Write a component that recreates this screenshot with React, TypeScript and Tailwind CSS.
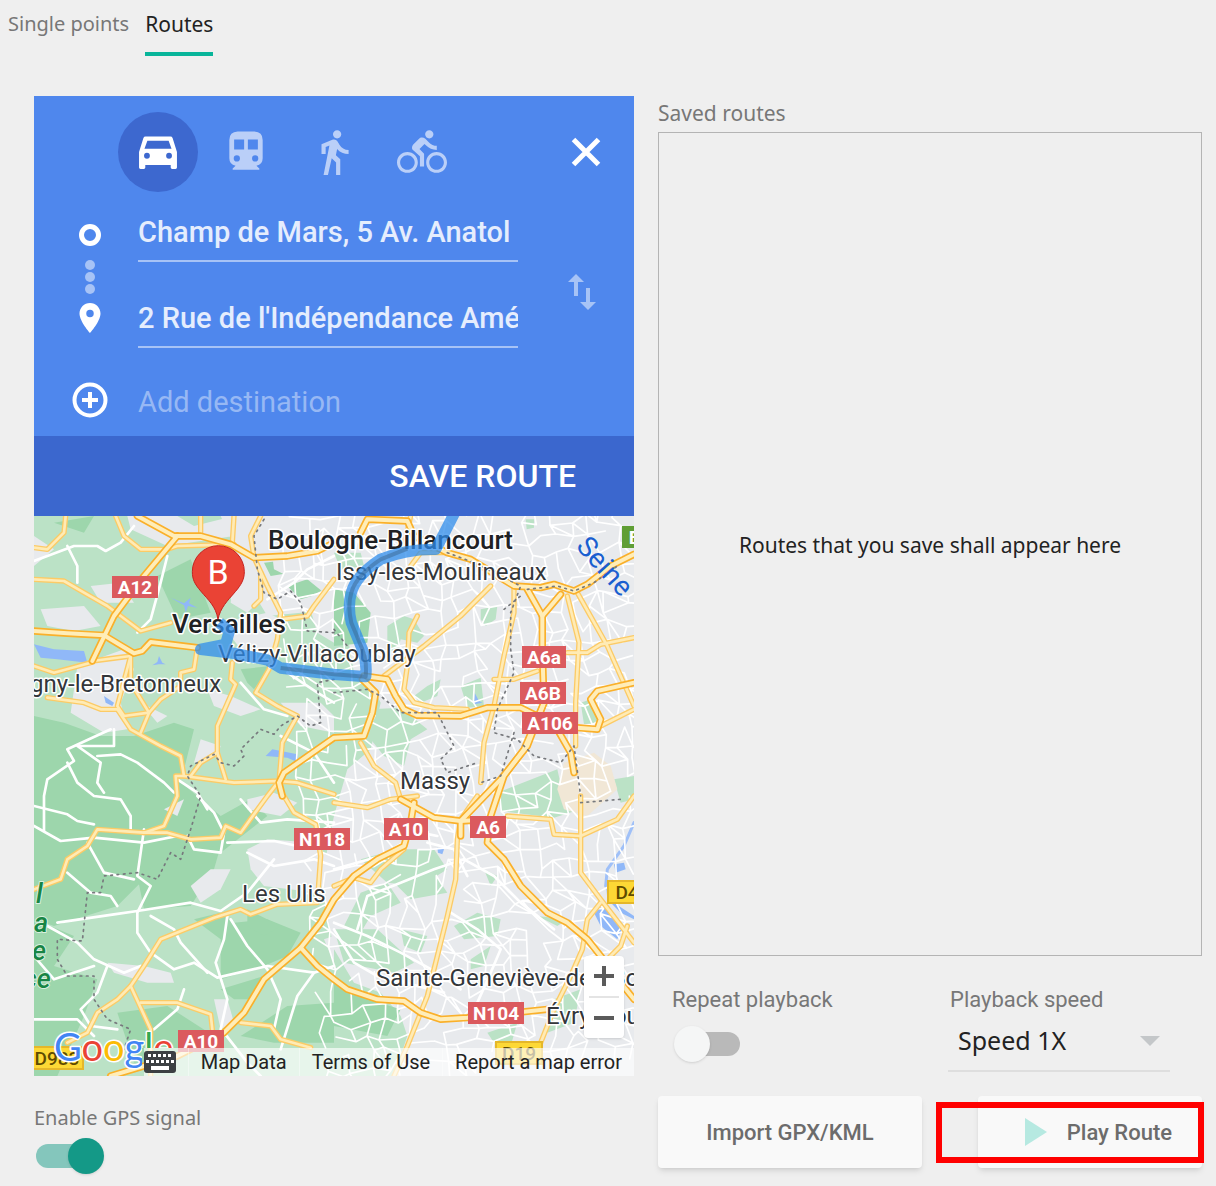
import type { ReactNode } from "react";
import { MdDirectionsBike, MdDirectionsWalk, MdPlace, MdSwapVert } from "react-icons/md";

/* Map geometry is stored at three units per map pixel. */

const lightGreen = [
  "M0 0H560L600 90 640 200 700 300 800 290 900 270 930 300 960 470 1020 520 1040 560 1010 700 940 760 900 900 860 1100 900 1300 960 1400 1040 1430 1100 1500 1120 1560 1080 1680 0 1680Z",
  "M1010 580L1100 575 1180 640 1130 670 1110 750 1050 720 1010 670Z",
  "M1280 510L1340 485 1350 570 1300 575Z",
  "M1340 280L1390 270 1385 310 1355 330 1340 310Z",
  "M1390 830L1570 760 1590 850 1640 880 1560 905 1400 885Z",
  "M1640 560L1670 550 1695 620 1650 625Z",
  "M1060 330L1110 300 1140 310 1170 360 1150 380 1100 370 1090 410 1060 400Z",
  "M980 1030L1090 1000 1200 1000 1240 1060 1160 1110 1060 1100Z",
  "M930 1230L980 1130 1060 1100 1100 1160 1010 1200 980 1250Z",
  "M1060 1080L1200 1070 1240 1130 1130 1150Z",
  "M900 1240L1030 1240 1140 1340 1080 1370 930 1340Z",
  "M1100 1240L1180 1260 1160 1310 1110 1290Z",
  "M1260 1230L1330 1190 1400 1210 1390 1260 1290 1270Z",
  "M1310 1330L1370 1290 1350 1350 1310 1360Z",
  "M1350 1060L1390 1080 1370 1110Z",
  "M1360 1550L1450 1520 1430 1590 1380 1580Z",
  "M1560 1450L1640 1420 1620 1520 1540 1550Z",
  "M1140 540L1180 510 1220 490 1210 540 1160 560Z",
  "M900 110L980 110 990 150 920 160Z",
  "M1475 10H1500V35L1478 40Z",
  "M1510 1200L1600 1210 1570 1230Z",
  "M1740 790L1800 780V850L1760 860Z",
];

const forest = [
  "M0 600L90 620 200 660 300 660 420 620 480 640 450 760 430 790 560 900 650 850 700 900 560 1010 440 1000 330 1090 250 1170 60 1230 0 1210Z",
  "M0 1210L120 1260 60 1350 190 1390 150 1500 70 1680 0 1680Z",
  "M440 1000L560 990 540 1060 470 1170 330 1180 310 1080Z",
  "M480 1210L560 1190 600 1220 700 1210 800 1250 760 1320 690 1350 560 1390 560 1270Z",
  "M560 1420L690 1380 650 1450 600 1450Z",
  "M250 1490L400 1470 540 1560 420 1640 300 1640Z",
  "M620 1560L760 1470 900 1460V1580L720 1580Z",
  "M370 180L470 130 530 290 430 310Z",
  "M690 140L780 130 770 170 710 180Z",
  "M760 210L820 190 870 230 800 250Z",
  "M900 220L960 230 1010 290 1000 380 900 390Z",
  "M620 460L710 450 660 520 640 500Z",
  "M900 1390L1000 1450 1100 1480 1060 1560 900 1530Z",
  "M60 20L180 0 150 50Z",
  "M640 1180L740 1230 690 1260 640 1230Z",
];

const urban = [
  "M20 280L150 270 200 330 120 345 40 330Z",
  "M170 210L260 200 300 260 200 260Z",
  "M130 450L270 400 300 460 260 560 280 640 210 650 110 590Z",
  "M280 0H430L480 30 600 0H700L720 110 600 60 400 90 290 40Z",
  "M600 130L670 150 690 240 640 290 590 260Z",
  "M560 320L700 290 740 310 720 420 620 400Z",
  "M520 520L590 540 680 580 620 600 540 570Z",
  "M700 0H900V120L780 190 720 160Z",
  "M740 560L860 560 900 600V650L800 630Z",
  "M820 250L900 200V380L850 350Z",
  "M320 560L400 600 370 620Z",
  "M500 670L560 690 550 720 480 740Z",
  "M640 1000L700 970 840 980 900 1040 850 1130 690 1110 650 1060Z",
  "M470 1110L530 1060 590 1060 560 1120 500 1160Z",
  "M220 1340L330 1350 410 1370 420 1400 340 1400 240 1370Z",
  "M540 1450L580 1450 600 1520 560 1540Z",
  "M640 850L720 830 790 860 740 900 640 880Z",
  "M870 1270L900 1260V1340Z",
  "M0 60L60 100 0 150Z",
  "M390 880L450 850 430 900Z",
];

const water = [
  "M0 385L60 400 150 405 160 440 70 430 20 425Z",
  "M375 420L385 440 395 445 375 445 355 448 370 438Z",
  "M695 720L715 700 790 715 795 740 760 725Z",
  "M210 540L240 560 235 570 215 560Z",
  "M410 245L450 262 470 245 465 262 490 275 462 270 455 290 450 268Z",
  "M1740 1045L1770 1040 1775 1060 1745 1070Z",
  "M1680 1190L1710 1165 1745 1210 1765 1240 1750 1270 1700 1230Z",
  "M1210 995L1230 1000 1225 1015 1212 1010Z",
  "M1322 530L1335 555 1345 560 1320 565Z",
  "M1800 1210L1760 1190 1720 1150 1715 1090 1740 1160 1800 1200Z",
];

const sideRoads = [
  "M0 135L40 120 120 90 190 90 215 105 260 80 300 30",
  "M100 90L130 150 130 200",
  "M400 120L380 200 350 310 310 350",
  "M230 640L100 700 120 735 40 790 30 840V945",
  "M100 740L130 800 180 840 260 850 290 900 290 945",
  "M240 640V690L130 690 200 740 190 800 210 830",
  "M190 720L260 715 310 740 390 800 420 830",
  "M0 870L100 895 130 915 180 925",
  "M0 930L80 975 180 965 330 980 430 960",
  "M330 940L310 1080 350 1110 310 1190 310 1250 350 1310 420 1360 480 1340 550 1385 700 1350 840 1370 900 1350",
  "M70 1220L240 1195 310 1185 470 1160 560 1185 640 1130 720 1030",
  "M40 1230L130 1280 180 1330 270 1370 320 1350",
  "M580 1200L570 1270 545 1340 580 1450 560 1540",
  "M590 1210L640 1290 700 1360 740 1450 720 1540",
  "M740 1600L790 1440 840 1370",
  "M350 1200L420 1240 440 1280 520 1370",
  "M220 1350L190 1430 140 1480 170 1530 250 1540",
  "M0 1510L130 1510 180 1560",
  "M490 840L540 890 570 950 560 1010 480 1000 460 960",
  "M620 850L680 920 760 910 900 920",
  "M0 1320L60 1390 180 1350",
  "M100 1070L170 1130 230 1140 250 1170",
  "M160 980L210 1070 300 1090",
  "M580 980L720 975 790 990",
  "M640 1010L720 1050 840 1030 900 1050",
  "M620 500L690 580 760 600",
  "M700 250L780 200 820 160 900 120",
  "M740 660L840 710 880 770 900 800",
  "M760 470L850 530 900 560",
  "M430 790L490 830 520 880",
  "M360 1540L430 1480 450 1420",
  "M570 1550L640 1640 680 1680",
  "M900 1220L1000 1260 1100 1310 1210 1370 1280 1420",
  "M900 1240L960 1340 1030 1380 1110 1400 1230 1430",
  "M900 1060L1040 1020 1160 950 1210 960",
  "M970 1240L1000 1140 1100 1100 1200 1060 1290 1030",
  "M1250 1190L1330 1240 1400 1300 1370 1370 1330 1460",
  "M1290 1030L1380 1080 1460 1160 1560 1240",
  "M1180 980L1260 1000 1300 1080",
];

const localYellow = [
  "M0 95L40 100 90 50 95 0",
  "M245 0L270 60 320 100 400 100 430 90 600 85",
  "M0 190L90 195 150 230 220 270 320 345 410 320",
  "M0 450L60 470 170 440",
  "M40 545L150 560 200 580 250 580 290 640 380 690 440 720 450 780 600 800 735 795 790 800 900 835",
  "M175 435L290 420 290 500 345 590 320 650",
  "M490 395L480 460 440 470 440 510 380 550 345 590 270 600 250 570 290 420",
  "M595 440L590 490 605 505 550 630 550 710 500 740 470 780",
  "M550 710L575 790",
  "M900 190L840 270 820 300 740 310",
  "M600 0L595 80",
  "M500 0V60",
  "M680 0L650 60 660 125 700 210 740 290 730 370 705 460 665 530 730 570 790 600 745 680 735 795",
  "M660 270L680 250 680 170",
  "M450 780L425 780 430 840 390 930 330 950 190 940 160 990 100 1030 80 1090 0 1120",
  "M330 950L400 950 470 970 560 965 575 930 620 950 700 840 735 795",
  "M750 840L780 890 845 925 860 1020 850 1160 730 1165 650 1195 620 1180 540 1205 380 1270 330 1350 290 1410 250 1450 190 1490 160 1550 100 1580",
  "M290 1410L350 1540 350 1680",
  "M320 1460H430L530 1495 535 1540",
  "M620 1520L710 1530 740 1570 830 1595",
  "M1440 220V290L1410 420 1380 570 1350 680 1340 800",
  "M1370 210L1280 300 1170 390 1050 480",
  "M1150 300L1125 350 1120 450 1110 520 1140 560 1200 575 1300 580",
  "M1600 240L1635 380 1625 560 1625 690",
  "M1630 230L1720 390 1800 570",
  "M1600 410H1660L1700 385 1800 365",
  "M1380 490H1440L1510 465",
  "M980 680L1020 750 1085 800 1100 850",
  "M1640 840V960L1640 1070 1700 1150 1800 1280",
  "M1420 900L1550 910 1560 955 1640 960 1750 910 1800 840",
  "M1700 1160L1660 1210 1645 1300 1610 1380 1560 1480 1520 1580",
  "M1330 840L1280 910 1270 970 1265 1090 1240 1200 1210 1320 1180 1440 1120 1590 1080 1680",
  "M900 1110L960 1085 1010 1100 1040 1060 1110 1000",
  "M900 860L1000 875 1070 850 1150 840",
  "M1110 90L1130 0",
  "M1130 150L1160 110 1240 110",
  "M1700 630L1800 580",
  "M1720 1330L1760 1290 1780 1230",
];

const motorways = [
  "M310 0L420 60 500 60 590 85 660 125 760 120 850 105 900 80",
  "M430 60L330 180 240 300 175 435",
  "M0 345L100 352 210 358 300 412 325 405 350 378 490 395",
  "M985 490L1025 530 1015 590 990 660 900 665 750 770 735 800 745 840",
  "M990 480L1060 490 1085 540 1110 580 1150 598 1280 600 1360 575 1460 575 1560 625",
  "M980 50L1000 10 1120 15 1140 60 1240 110 1310 130 1440 210 1520 215 1560 205 1620 225 1660 205 1730 150 1800 115",
  "M1480 220L1525 300 1525 400 1530 560 1480 690 1400 790 1280 915",
  "M1580 235L1525 300",
  "M1500 600L1570 640 1610 710 1620 770",
  "M1630 635L1690 640 1700 610 1670 550 1690 525 1800 500",
  "M1530 560L1470 700 1410 780 1390 840 1370 900 1360 980 1410 1030 1460 1110 1540 1190 1600 1220 1660 1270 1700 1320 1760 1400 1800 1450",
  "M1100 850L1200 905 1280 915 1370 910",
  "M1280 915V960",
  "M1140 860L1130 920 1110 990 1030 1030 960 1080 900 1150 860 1220 800 1295 690 1390 630 1490 570 1550 430 1620 230 1680",
  "M800 1295L850 1350 900 1390 940 1420 1030 1450 1110 1455 1160 1490 1220 1510 1300 1505 1540 1480",
];

const borders = [
  "M690 10L660 60 670 160 690 230 730 250 770 225 800 260 820 345 900 350",
  "M900 490L850 500 860 620 830 630 790 600 740 630 720 655 680 640 620 700 630 720 600 750 560 740 540 715 470 750 460 780 500 840 470 940 440 1030 410 1010 370 1090 310 1070 210 1080 200 1130 160 1130 145 1275 70 1270 70 1330 100 1380 180 1380 180 1450 220 1510 290 1540 270 1600",
  "M900 340L940 390",
  "M900 530L1000 520 1040 540 1100 590 1210 590 1260 690 1220 730 1240 770 1330 740",
  "M1240 110L1320 140 1460 210 1430 290 1430 400 1440 470 1390 580 1380 650 1450 670 1500 720 1580 740 1620 690 1640 840",
  "M1480 220L1570 210 1620 225 1680 200 1750 150",
  "M1410 280L1460 240",
  "M1440 650L1400 780 1340 800",
  "M1640 860L1760 850",
];

const urbanStreets = (() => {
  let seed = 7;
  const random = () => {
    seed = (seed * 16807) % 2147483647;
    return seed / 2147483647;
  };
  const step = 46;
  const columns = 24;
  const rows = 38;
  const nodes = Array.from({ length: rows }, (_, r) =>
    Array.from({ length: columns }, (_, c) => [
      Math.round(800 + c * step + r * 4 + random() * 34 - 90),
      Math.round(r * step - c * 5 + random() * 34),
    ]),
  );
  let d = "";
  for (let r = 0; r < rows - 1; r++) {
    for (let c = 0; c < columns - 1; c++) {
      const [x, y] = nodes[r][c];
      if (random() < 0.7) d += `M${x} ${y}L${nodes[r][c + 1].join(" ")}`;
      if (random() < 0.7) d += `M${x} ${y}L${nodes[r + 1][c].join(" ")}`;
      if (random() < 0.25) d += `M${x} ${y}L${nodes[r + 1][c + 1].join(" ")}`;
    }
  }
  return d;
})();

const routePath =
  "M556 320L586 345 575 385 500 400 600 412 700 432 740 456 900 475 995 482Q1000 440 985 400L952 320Q940 270 952 230 965 180 1040 130 1120 98 1205 100 1232 50 1262 -10";

type Shield = { label: string; x: number; y: number; w: number; kind: "red" | "yellow" | "green" };
const shields: Shield[] = [
  { label: "A12", x: 78, y: 60, w: 46, kind: "red" },
  { label: "A6a", x: 488, y: 130, w: 44, kind: "red" },
  { label: "A6B", x: 486, y: 166, w: 46, kind: "red" },
  { label: "A106", x: 488, y: 196, w: 56, kind: "red" },
  { label: "N118", x: 260, y: 312, w: 56, kind: "red" },
  { label: "A10", x: 350, y: 302, w: 44, kind: "red" },
  { label: "A6", x: 436, y: 300, w: 36, kind: "red" },
  { label: "N104", x: 434, y: 486, w: 56, kind: "red" },
  { label: "A10", x: 144, y: 514, w: 46, kind: "red" },
  { label: "D983", x: -3, y: 531, w: 52, kind: "yellow" },
  { label: "D19", x: 462, y: 526, w: 46, kind: "yellow" },
  { label: "D4", x: 574, y: 365, w: 38, kind: "yellow" },
  { label: "E", x: 588, y: 10, w: 24, kind: "green" },
];
const shieldFill = { red: "#db5a5e", yellow: "#fdd835", green: "#5f9e35" };
const shieldText = { red: "#ffffff", yellow: "#5f4b00", green: "#ffffff" };

const places = [
  { label: "Boulogne-Billancourt", x: 234, y: 33, big: true },
  { label: "Issy-les-Moulineaux", x: 302, y: 64, big: false },
  { label: "Versailles", x: 138, y: 117, big: true },
  { label: "Vélizy-Villacoublay", x: 184, y: 146, big: false },
  { label: "gny-le-Bretonneux", x: -4, y: 176, big: false },
  { label: "Massy", x: 366, y: 273, big: false },
  { label: "Les Ulis", x: 208, y: 386, big: false },
  { label: "Sainte-Geneviève-des-Bois", x: 342, y: 470, big: false },
  { label: "Évry-Courcouronnes", x: 512, y: 508, big: false },
];

function MapCanvas() {
  return (
    <svg
      className="absolute inset-0 h-full w-full"
      viewBox="0 0 600 560"
      preserveAspectRatio="xMidYMid slice"
      role="img"
      aria-label="Map of the route to Versailles"
    >
      <g transform="scale(0.33333)" fill="none" strokeLinecap="round" strokeLinejoin="round">
        <rect width="1800" height="1680" fill="#e8eaed" />
        {lightGreen.map((d) => <path key={d} d={d} fill="#bbe2c6" />)}
        {forest.map((d) => <path key={d} d={d} fill="#9dd6ac" />)}
        {urban.map((d) => <path key={d} d={d} fill="#e8eaed" />)}
        <path d="M1590 740L1680 710 1730 750 1750 820 1660 900 1590 880 1570 820Z" fill="#f1e7d6" />
        {water.map((d) => <path key={d} d={d} fill="#90b8f8" />)}
        <path d="M1800 920L1770 990 1720 1060 1715 1110" stroke="#9fc0f8" strokeWidth="9" />
        <path d={urbanStreets} stroke="#ffffff" strokeWidth="5" />
        {sideRoads.map((d) => <path key={d} d={d} stroke="#ffffff" strokeWidth="8" />)}
        {localYellow.map((d) => <path key={d} d={d} stroke="#fccb66" strokeWidth="16" />)}
        {localYellow.map((d) => <path key={d} d={d} stroke="#ffebb5" strokeWidth="8" />)}
        {motorways.map((d) => <path key={d} d={d} stroke="#fab02a" strokeWidth="22" />)}
        {motorways.map((d) => <path key={d} d={d} stroke="#ffedb8" strokeWidth="12" />)}
        {borders.map((d) => (
          <path key={d} d={d} stroke="#77797d" strokeWidth="5" strokeDasharray="5 14" />
        ))}
      </g>
      <g fontFamily="Roboto, sans-serif" paintOrder="stroke" strokeLinejoin="round">
        {places.map((p) => (
          <text
            key={p.label}
            x={p.x}
            y={p.y}
            fontSize={p.big ? 26 : 24}
            fontWeight={p.big ? 500 : 400}
            fill={p.big ? "#202124" : "#33363a"}
            stroke="#ffffff"
            strokeWidth="3"
          >
            {p.label}
          </text>
        ))}
        <text x="0" y="0" fontSize="28" fill="#1a5fd0" transform="translate(541 31) rotate(48)">
          Seine
        </text>
        <g fontSize="27" fontStyle="italic" fill="#188544" stroke="#d8f0de" strokeWidth="2" fontWeight="500">
          <text x="2" y="387">l</text>
          <text x="0" y="416">a</text>
          <text x="-2" y="444">e</text>
          <text x="-11" y="472">ce</text>
        </g>
      </g>
      <g fontFamily="Roboto, sans-serif" fontSize="19" textAnchor="middle">
        {shields.map((s) => (
          <g key={`${s.label}${s.x}`}>
            <rect
              x={s.x}
              y={s.y}
              width={s.w}
              height="22"
              fill={shieldFill[s.kind]}
              stroke={s.kind === "yellow" ? "#e5b72a" : "none"}
              strokeWidth="2"
            />
            <text x={s.x + s.w / 2} y={s.y + 18} fill={shieldText[s.kind]} fontWeight={s.kind === "yellow" ? 500 : 700}>
              {s.label}
            </text>
          </g>
        ))}
      </g>
      <g transform="scale(0.33333)" fill="none" strokeLinejoin="round">
        <path d={routePath} stroke="#2f8ceb" strokeOpacity="0.75" strokeWidth="34" />
        <path
          d="M740 456L900 475 995 482Q1000 440 985 400L952 320Q940 270 952 230 965 180 1040 130L1120 98"
          stroke="#39668f"
          strokeOpacity="0.5"
          strokeWidth="12"
        />
        <path
          d="M552 310C545 270 525 255 500 225C482 204 475 190 475 167A78 78 0 0 1 631 167C631 190 622 206 604 227C580 255 559 275 552 310Z"
          fill="#ea4335"
          stroke="#c5221f"
          strokeWidth="3"
        />
      </g>
      <text x="184" y="68" textAnchor="middle" fontFamily="Roboto, sans-serif" fontSize="34" fill="#ffffff">
        B
      </text>
      <clipPath id="logo-clip">
        <path d="M0 500H108V560H0ZM108 500H180V532H108Z" />
      </clipPath>
      <text
        x="20"
        y="545"
        fontFamily="Lato, sans-serif"
        fontSize="38"
        stroke="#ffffff"
        strokeWidth="3"
        strokeLinejoin="round"
        paintOrder="stroke"
        clipPath="url(#logo-clip)"
      >
        <tspan fill="#4285f4">G</tspan>
        <tspan fill="#ea4335">o</tspan>
        <tspan fill="#fbbc05">o</tspan>
        <tspan fill="#4285f4">g</tspan>
        <tspan fill="#34a853">l</tspan>
        <tspan fill="#ea4335">e</tspan>
      </text>
    </svg>
  );
}

function KeyboardIcon() {
  return (
    <svg className="h-[22px] w-8" viewBox="0 0 32 22" aria-hidden="true">
      <rect width="32" height="22" rx="3" fill="#3c4043" />
      <g fill="#ffffff">
        {[4, 9, 14, 19, 24].map((x) => (
          <rect key={x} x={x} y="3" width="3" height="3" />
        ))}
        {[2, 7, 12, 17, 22, 27].map((x) => (
          <rect key={x} x={x} y="9" width="3" height="3" />
        ))}
        <rect x="7" y="15" width="18" height="4" />
      </g>
    </svg>
  );
}

function CarIcon() {
  return (
    <svg className="size-[50px]" viewBox="0 0 24 24" fill="currentColor" fillRule="evenodd" aria-hidden="true">
      <path d="M6 4.6H18Q18.7 4.6 19 5.3L21.1 12V19.4Q21.1 20.1 20.4 20.1H18.8Q18.1 20.1 18.1 19.4V18.2H5.9V19.4Q5.9 20.1 5.2 20.1H3.6Q2.9 20.1 2.9 19.4V12L5 5.3Q5.3 4.6 6 4.6ZM6.9 6.6L5.5 10.4H18.5L17.1 6.6ZM6.7 12.4A1.4 1.4 0 1 0 6.7 15.2A1.4 1.4 0 1 0 6.7 12.4ZM17.3 12.4A1.4 1.4 0 1 0 17.3 15.2A1.4 1.4 0 1 0 17.3 12.4Z" />
    </svg>
  );
}

function SubwayIcon() {
  return (
    <svg className="size-[50px]" viewBox="0 0 24 24" fill="currentColor" fillRule="evenodd" aria-hidden="true">
      <path d="M8 2.2H16Q20 2.4 20 6.2V15Q20 18 17 18.6L18.4 19.9V20.5H5.6V19.9L7 18.6Q4 18 4 15V6.2Q4 2.4 8 2.2ZM6.3 6V10.8H11.1V6ZM12.9 6V10.8H17.7V6ZM7.6 13.6A1.5 1.5 0 1 0 7.6 16.6A1.5 1.5 0 1 0 7.6 13.6ZM16.4 13.6A1.5 1.5 0 1 0 16.4 16.6A1.5 1.5 0 1 0 16.4 13.6Z" />
    </svg>
  );
}

function CloseIcon() {
  return (
    <svg className="size-12" viewBox="0 0 48 48" fill="none" stroke="currentColor" strokeWidth="5" aria-hidden="true">
      <path d="M11.5 11.5L36.5 36.5M36.5 11.5L11.5 36.5" />
    </svg>
  );
}

function AddIcon() {
  return (
    <svg className="mt-11 size-[42px]" viewBox="0 0 42 42" fill="none" stroke="currentColor" strokeWidth="4" aria-hidden="true">
      <circle cx="21" cy="20" r="15.5" />
      <path d="M21 12V28M13 20H29" />
    </svg>
  );
}

function ModeButton({ label, active, children }: { label: string; active?: boolean; children: ReactNode }) {
  return (
    <button
      type="button"
      aria-label={label}
      aria-pressed={Boolean(active)}
      className={
        active
          ? "flex size-20 items-center justify-center rounded-full bg-[#3d68cf] text-white"
          : "flex size-20 items-center justify-center rounded-full text-[#bacff8]"
      }
    >
      {children}
    </button>
  );
}

const fieldClass =
  "h-[62px] w-full min-w-0 border-b-2 bg-transparent text-[29px] outline-none placeholder:text-[#97b8f4]";

function DirectionsPanel() {
  return (
    <form className="bg-[#4f87ed] font-[Roboto,sans-serif]" onSubmit={(e) => e.preventDefault()}>
      <div className="flex items-center pt-4 pr-6 pb-2 pl-[84px]">
        <div className="flex gap-2">
          <ModeButton label="Driving" active><CarIcon /></ModeButton>
          <ModeButton label="Transit"><SubwayIcon /></ModeButton>
          <ModeButton label="Walking"><MdDirectionsWalk size={50} /></ModeButton>
          <ModeButton label="Cycling"><MdDirectionsBike size={50} /></ModeButton>
        </div>
        <button type="button" aria-label="Close" className="ml-auto text-white">
          <CloseIcon />
        </button>
      </div>
      <div className="flex pb-0.5">
        <div className="flex w-[104px] flex-col items-center pt-6 pr-2 pl-4 text-white">
          <span className="size-[22px] rounded-full border-5 border-white" />
          <span className="mt-3.5 flex flex-col gap-0.5">
            <i className="size-2.5 rounded-full bg-[#a7c3f6]" />
            <i className="size-2.5 rounded-full bg-[#a7c3f6]" />
            <i className="size-2.5 rounded-full bg-[#a7c3f6]" />
          </span>
          <MdPlace size={36} className="mt-1.5" />
          <AddIcon />
        </div>
        <div className="flex min-w-0 flex-1 flex-col gap-6">
          <input aria-label="Starting point" className={`${fieldClass} border-[#a7c3f6] pt-1 font-medium text-[#e5edfd]`} defaultValue="Champ de Mars, 5 Av. Anatol" />
          <input aria-label="Destination" className={`${fieldClass} border-[#a7c3f6] pt-1 font-medium text-[#e5edfd]`} defaultValue="2 Rue de l'Indépendance Américaine" />
          <input aria-label="Add destination" className={`${fieldClass} border-transparent text-white`} placeholder="Add destination" />
        </div>
        <div className="flex w-[116px] items-start justify-center pt-[68px] pl-3">
          <button type="button" aria-label="Swap start and destination" className="text-[#a7c3f6]">
            <MdSwapVert size={48} />
          </button>
        </div>
      </div>
      <div className="flex h-20 items-center justify-end bg-[#3b67ce] pr-[58px]">
        <button type="submit" className="text-[32px] font-medium text-white">SAVE ROUTE</button>
      </div>
    </form>
  );
}

function RouteMap() {
  return (
    <div className="relative h-[560px] overflow-hidden font-[Roboto,sans-serif]">
      <MapCanvas />
      <div className="absolute right-2.5 bottom-[38px] flex w-10 flex-col items-center rounded-sm bg-white shadow">
        <button type="button" aria-label="Zoom in" className="flex h-10 w-full items-center justify-center">
          <svg className="size-5" viewBox="0 0 20 20" aria-hidden="true"><path d="M10 0V20M0 10H20" stroke="#5b5b5b" strokeWidth="4" /></svg>
        </button>
        <span className="h-0.5 w-[30px] bg-[#e4e4e4]" />
        <button type="button" aria-label="Zoom out" className="flex h-10 w-full items-center justify-center">
          <svg className="size-5" viewBox="0 0 20 20" aria-hidden="true"><path d="M0 10H20" stroke="#5b5b5b" strokeWidth="4" /></svg>
        </button>
      </div>
      <div className="absolute right-0 bottom-0 flex h-7 items-center text-[20px] leading-7 text-[#222]">
        <button type="button" aria-label="Keyboard shortcuts" className="flex h-7 items-center bg-white/65 pr-3"><KeyboardIcon /></button>
        <button type="button" className="h-7 border-l border-white/40 bg-white/65 px-3">Map Data</button>
        <a href="#terms" className="h-7 border-l border-white/40 bg-white/65 px-3">Terms of Use</a>
        <a href="#report" className="h-7 border-l border-white/40 bg-white/65 px-3">Report a map error</a>
      </div>
    </div>
  );
}

export default function App() {
  return (
    <main className="min-h-screen bg-[#efefef] font-['Noto_Sans',sans-serif] text-[#777]">
      <nav className="flex h-14 gap-4 pl-2 text-[20px]">
        <a href="#points" className="pt-2 leading-8">Single points</a>
        <a href="#routes" aria-current="page" className="border-b-4 border-[#08b59a] pt-2 text-[21px] leading-8 text-[#222]">Routes</a>
      </nav>

      <div className="grid grid-cols-[75fr_68fr] gap-6 pt-10 pr-3.5 pl-[34px]">
        <section aria-label="Route planner" className="min-w-0">
          <DirectionsPanel />
          <RouteMap />
          <label className="flex flex-col items-start gap-1 pt-[26px] text-[20px] leading-8">
            Enable GPS signal
            <input
              type="checkbox"
              defaultChecked
              className="relative ml-0.5 h-9 w-[68px] appearance-none before:absolute before:top-1.5 before:left-0 before:h-6 before:w-[66px] before:rounded-full before:bg-[#84c6bc] after:absolute after:top-0 after:right-0 after:size-9 after:rounded-full after:bg-[#149987] after:shadow"
            />
          </label>
        </section>

        <section aria-label="Saved routes" className="flex min-w-0 flex-col pb-1.5">
          <h2 className="pb-0.5 text-[21px] leading-[34px]">Saved routes</h2>
          <div className="flex flex-1 items-center justify-center border border-[#b4b4b4] pt-1 text-[21px] text-[#222]">
            Routes that you save shall appear here
          </div>
          <div className="flex justify-between pt-7 pr-8 pl-3.5 font-[Roboto,sans-serif] text-[22px]">
            <label className="flex flex-col items-start gap-2.5 leading-8">
              Repeat playback
              <input
                type="checkbox"
                className="relative ml-0.5 h-9 w-[66px] appearance-none before:absolute before:top-1.5 before:right-0 before:h-6 before:w-[56px] before:rounded-full before:bg-[#b9b9b9] after:absolute after:top-0 after:left-0 after:size-9 after:rounded-full after:bg-[#f5f6f6] after:shadow"
              />
            </label>
            <label className="flex w-[222px] flex-col leading-8">
              <span className="pl-0.5">Playback speed</span>
              <span className="relative border-b-2 border-[#dedede] font-['Noto_Sans',sans-serif]">
                <select className="block h-[54px] w-full appearance-none bg-transparent pb-1.5 pl-2.5 text-[25px] text-[#222] outline-none">
                  <option>Speed 1X</option>
                </select>
                <svg className="pointer-events-none absolute top-5 right-2.5 h-2.5 w-5" viewBox="0 0 20 10" aria-hidden="true">
                  <path d="M0 0H20L10 10Z" fill="#c4c7c9" />
                </svg>
              </span>
            </label>
          </div>
          <div className="grid grid-cols-[33fr_28fr] gap-14 pt-6 font-[Roboto,sans-serif] text-[22px] font-medium text-[#6c6c6c]">
            <button type="button" className="h-[72px] rounded bg-[#f9f9f9] shadow-md">Import GPX/KML</button>
            <div className="relative">
              <button type="button" className="flex h-[72px] w-full items-center justify-end gap-5 rounded bg-[#f9f9f9] pr-[30px] shadow-md">
                <svg className="h-7 w-[22px]" viewBox="0 0 22 28" aria-hidden="true"><path d="M0 0L22 14 0 28Z" fill="#b6e9e1" /></svg>
                Play Route
              </button>
              <span className="pointer-events-none absolute top-1.5 -right-0.5 -left-[42px] h-[61px] border-6 border-[#ff0000]" />
            </div>
          </div>
        </section>
      </div>
    </main>
  );
}
